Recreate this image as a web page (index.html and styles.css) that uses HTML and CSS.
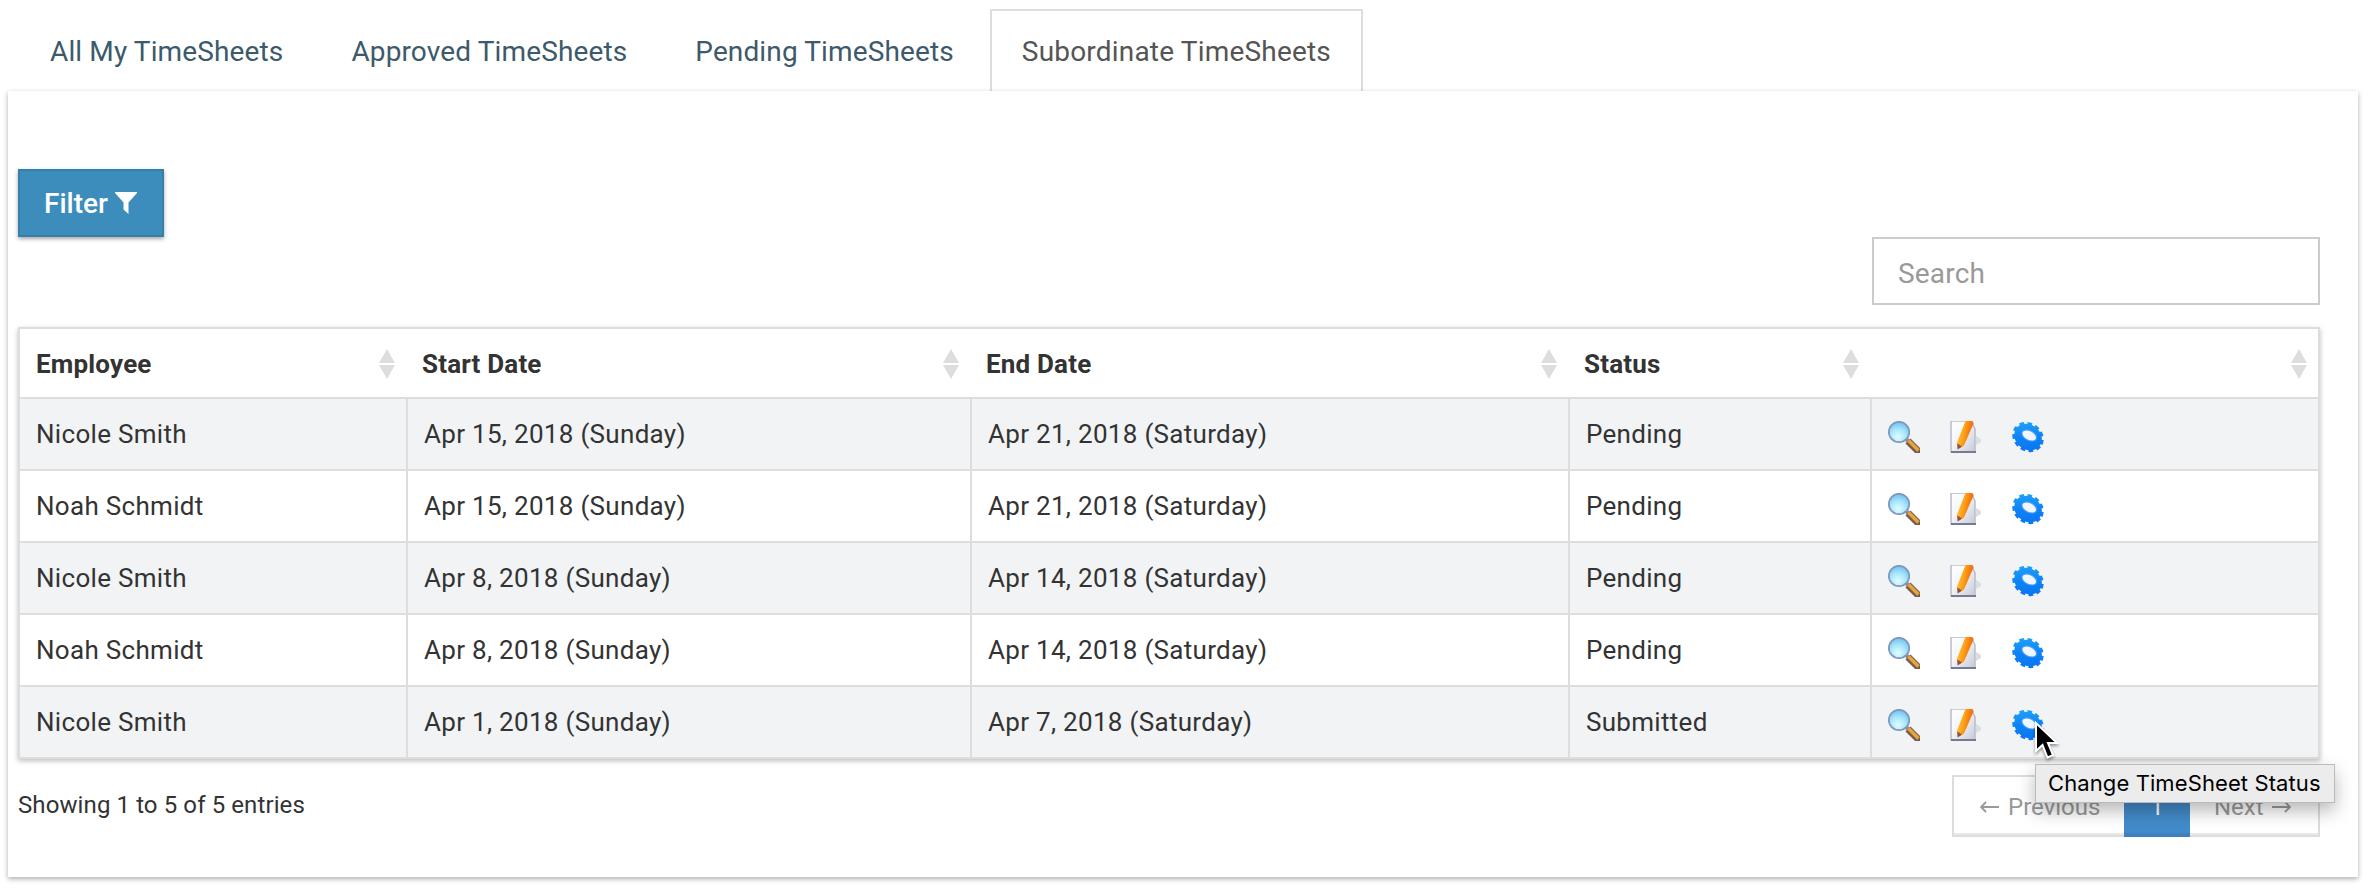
FILE: index.html
```
<!DOCTYPE html>
<html lang="en">
<head>
<meta charset="utf-8">
<title>TimeSheets</title>
<link rel="stylesheet" href="styles.css">
</head>
<body>
<svg class="defs" aria-hidden="true">
  <defs>
    <radialGradient id="glass" cx=".45" cy=".75" r=".75"><stop offset="0" stop-color="#e2fdff"/><stop offset=".5" stop-color="#aae8fc"/><stop offset="1" stop-color="#6fc0f0"/></radialGradient>
    <linearGradient id="gearfill" x1="0" y1="0" x2="1" y2="1"><stop offset="0" stop-color="#22a8fa"/><stop offset=".5" stop-color="#0d84f6"/><stop offset="1" stop-color="#0a70f0"/></linearGradient>
    <linearGradient id="paper" x1="0" y1="0" x2="1" y2="1"><stop offset="0" stop-color="#fff"/><stop offset=".4" stop-color="#f6f7fa"/><stop offset="1" stop-color="#c4c9d8"/></linearGradient>
    <linearGradient id="pencil" x1="0" y1="0" x2="1" y2=".3"><stop offset="0" stop-color="#ffd34a"/><stop offset=".55" stop-color="#ff9a14"/><stop offset="1" stop-color="#e8600c"/></linearGradient>
  </defs>
  <symbol id="view" viewBox="0 0 32 32">
    <path d="M17.500 17.500l4 4" stroke="#8d8ea5" stroke-width="4"/>
    <path d="M20 20l12 12" stroke="#7d5a45" stroke-width="7"/>
    <path d="M20.500 19.500l10 10" stroke="#e2a540" stroke-width="3.500"/>
    <circle cx="11" cy="11" r="10.200" fill="url(#glass)" stroke="#8099bd" stroke-width="1.800"/>
  </symbol>
  <symbol id="edit" viewBox="0 0 32 32">
    <path d="M26 15l5 3v3l-5 3z" fill="#dcdde0"/>
    <path d="M1 0h20l4 8v23H1z" fill="url(#paper)" stroke="#b9bdcc" stroke-width="1.500"/>
    <path d="M1 31h25" stroke="#777b92" stroke-width="2"/>
    <path d="M15.500 0h7l1 2.500L14 24.500l-6 3.500-1-6.500z" fill="url(#pencil)"/>
    <path d="M7.200 22.500l5 3-4.700 3z" fill="#93503d"/>
  </symbol>
  <symbol id="gear" viewBox="0 0 32 32">
    <g transform="rotate(38 16 16)">
      <ellipse cx="16" cy="16" rx="15" ry="12.800" fill="none" stroke="url(#gearfill)" stroke-width="3" stroke-dasharray="4.600 3.400"/>
      <ellipse cx="16" cy="16" rx="14.600" ry="12.400" fill="url(#gearfill)"/>
    </g>
    <ellipse cx="17.200" cy="14.500" rx="7.800" ry="4.800" transform="rotate(28 17.200 14.500)" fill="#f0f6ff" stroke="#4b9df5" stroke-width="1"/>
  </symbol>
  <symbol id="sort" viewBox="0 0 16 30"><path d="M8 0l8 14H0zM0 16h16L8 30z" fill="#ddd"/></symbol>
</svg>
<nav class="tabs">
  <a class="tab">All My TimeSheets</a>
  <a class="tab">Approved TimeSheets</a>
  <a class="tab">Pending TimeSheets</a>
  <a class="tab active">Subordinate TimeSheets</a>
</nav>
<main class="panel">
  <button class="filter">Filter <svg class="funnel" viewBox="0 0 22 22"><path d="M0 0h22v1l-8.500 9.500V22L8.500 17.500v-7L0 1z" fill="#fff"/></svg></button>
  <div class="search-row"><input class="search" placeholder="Search"></div>
  <table class="sheet">
    <colgroup><col class="c1"><col class="c2"><col class="c3"><col class="c4"><col class="c5"></colgroup>
    <thead><tr>
      <th><div class="head">Employee<svg class="sort"><use href="#sort"/></svg></div></th>
      <th><div class="head">Start Date<svg class="sort"><use href="#sort"/></svg></div></th>
      <th><div class="head">End Date<svg class="sort"><use href="#sort"/></svg></div></th>
      <th><div class="head">Status<svg class="sort"><use href="#sort"/></svg></div></th>
      <th><div class="head"><span></span><svg class="sort"><use href="#sort"/></svg></div></th>
    </tr></thead>
    <tbody>
      <tr><td>Nicole Smith</td><td>Apr 15, 2018 (Sunday)</td><td>Apr 21, 2018 (Saturday)</td><td>Pending</td><td><div class="actions"><svg><use href="#view"/></svg><svg><use href="#edit"/></svg><svg><use href="#gear"/></svg></div></td></tr>
      <tr><td>Noah Schmidt</td><td>Apr 15, 2018 (Sunday)</td><td>Apr 21, 2018 (Saturday)</td><td>Pending</td><td><div class="actions"><svg><use href="#view"/></svg><svg><use href="#edit"/></svg><svg><use href="#gear"/></svg></div></td></tr>
      <tr><td>Nicole Smith</td><td>Apr 8, 2018 (Sunday)</td><td>Apr 14, 2018 (Saturday)</td><td>Pending</td><td><div class="actions"><svg><use href="#view"/></svg><svg><use href="#edit"/></svg><svg><use href="#gear"/></svg></div></td></tr>
      <tr><td>Noah Schmidt</td><td>Apr 8, 2018 (Sunday)</td><td>Apr 14, 2018 (Saturday)</td><td>Pending</td><td><div class="actions"><svg><use href="#view"/></svg><svg><use href="#edit"/></svg><svg><use href="#gear"/></svg></div></td></tr>
      <tr><td>Nicole Smith</td><td>Apr 1, 2018 (Sunday)</td><td>Apr 7, 2018 (Saturday)</td><td>Submitted</td><td><div class="actions"><svg><use href="#view"/></svg><svg><use href="#edit"/></svg><svg><use href="#gear"/></svg></div></td></tr>
    </tbody>
  </table>
  <footer class="foot">
    <div class="info">Showing 1 to 5 of 5 entries</div>
    <div class="pager"><a class="prev"><svg class="arrow" viewBox="0 0 19 12"><path d="M1 6h18M6 1L1 6l5 5" fill="none" stroke="#999" stroke-width="1.800"/></svg>Previous</a><a class="page">1</a><a class="next">Next<svg class="arrow" viewBox="0 0 19 12"><path d="M0 6h18M13 1l5 5-5 5" fill="none" stroke="#999" stroke-width="1.800"/></svg></a></div>
  </footer>
</main>
<div class="tooltip">Change TimeSheet Status</div>
<svg class="cursor" viewBox="0 0 26 42"><path d="M2 2v28l6.500-6 5 12.500 5.500-2.300L14 22h9z" fill="#000" stroke="#fff" stroke-width="2"/></svg>
</body>
</html>
```
FILE: styles.css
```
* { box-sizing: border-box; }
body {
  margin: 0;
  height: 892px;
  overflow: hidden;
  position: relative;
  background: #fff;
  color: #333;
  font-family: Roboto, sans-serif;
  font-size: 26px;
}
.defs { position: absolute; width: 0; height: 0; }
.tabs { display: flex; gap: 4px; padding: 9px 0 0 18px; height: 91px; }
.tab {
  padding: 21px 30px 0;
  border: 2px solid transparent;
  border-bottom: 0;
  font-size: 28px;
  line-height: 40px;
  letter-spacing: .13px;
  color: #3c5a6b;
  white-space: nowrap;
}
.tab.active { border-color: #ddd; color: #555; letter-spacing: .19px; }
.panel {
  position: relative;
  width: 2350px;
  height: 786px;
  margin-left: 8px;
  padding: 78px 38px 0 10px;
  background: #fff;
  box-shadow: 0 2px 5px rgba(0, 0, 0, .32);
}
.filter {
  display: flex;
  align-items: center;
  gap: 7px;
  width: 146px;
  height: 68px;
  padding: 0 0 0 24px;
  border: 2px solid #367fa9;
  background: #3c8dbc;
  color: #fff;
  font: 500 28px Roboto, sans-serif;
  box-shadow: 0 2px 4px rgba(0, 0, 0, .35);
}
.funnel { width: 22px; height: 22px; }
.search-row { display: flex; justify-content: flex-end; }
.search {
  width: 448px;
  height: 68px;
  padding: 4px 24px 0;
  border: 2px solid #ccc;
  font: 28px Roboto, sans-serif;
  letter-spacing: .2px;
}
.search::placeholder { color: #999; }
.sheet {
  width: 2302px;
  margin-top: 22px;
  border: 2px solid #ddd;
  border-collapse: separate;
  border-spacing: 0;
  table-layout: fixed;
  box-shadow: 0 2px 5px rgba(0, 0, 0, .26);
}
.c1 { width: 386px; }
.c2 { width: 564px; }
.c3 { width: 598px; }
.c4 { width: 302px; }
.c5 { width: 448px; }
th { height: 68px; padding: 0; text-align: left; font-weight: 700; letter-spacing: .18px; }
.head { display: flex; justify-content: space-between; align-items: center; padding: 2px 11px 0 16px; }
.sort { width: 16px; height: 30px; }
td {
  height: 72px;
  padding: 0 16px 0 16px;
  border-top: 2px solid #ddd;
  letter-spacing: .3px;
}
td + td { border-left: 2px solid #ddd; }
tbody tr:nth-child(odd) { background: #f2f3f5; }
.actions { display: flex; gap: 30px; padding-top: 6px; }
.actions svg { width: 32px; height: 32px; }
.foot { display: flex; justify-content: space-between; padding-top: 16px; }
.info { padding-top: 16px; font-size: 24px; line-height: 28px; letter-spacing: .1px; }
.pager {
  display: flex;
  width: 368px;
  height: 62px;
  border: 2px solid #ddd;
  box-shadow: inset 0 -2px #e8e8e8;
  font-size: 24px;
  line-height: 58px;
  color: #999;
}
.prev, .next { display: flex; align-items: center; gap: 9px; padding-top: 2px; }
.prev { width: 170px; padding-left: 26px; }
.next { gap: 8px; padding-left: 24px; }
.arrow { width: 19px; height: 12px; }
.page {
  width: 66px;
  margin: -2px 0;
  padding-top: 3px;
  background: #428bca;
  box-shadow: inset 0 -4px #3e80bd;
  color: #fff;
  text-align: center;
}
.tooltip {
  position: absolute;
  left: 2035px;
  top: 764px;
  width: 300px;
  height: 39px;
  padding-left: 12px;
  background: #ececec;
  border: 1px solid #bbb;
  box-shadow: 0 8px 18px rgba(0, 0, 0, .28);
  color: #000;
  font: 22px/36px Inter, sans-serif;
  letter-spacing: .1px;
  white-space: nowrap;
}
.cursor { position: absolute; left: 2034px; top: 721px; width: 26px; height: 42px; filter: drop-shadow(0 2px 1.500px rgba(0, 0, 0, .4)); }
```
